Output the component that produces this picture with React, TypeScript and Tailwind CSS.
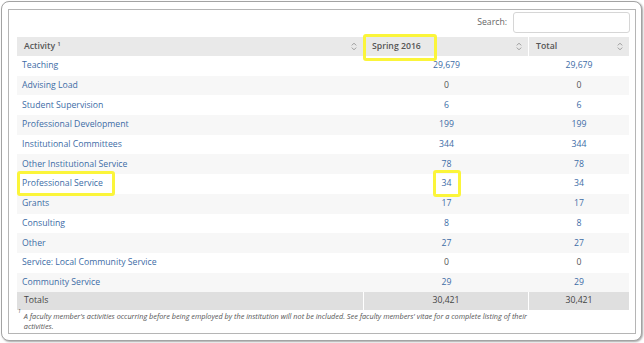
import React from "react";

type Row = { name: string; spring: string; total: string };

const rows: Row[] = [
  { name: "Teaching", spring: "29,679", total: "29,679" },
  { name: "Advising Load", spring: "0", total: "0" },
  { name: "Student Supervision", spring: "6", total: "6" },
  { name: "Professional Development", spring: "199", total: "199" },
  { name: "Institutional Committees", spring: "344", total: "344" },
  { name: "Other Institutional Service", spring: "78", total: "78" },
  { name: "Professional Service", spring: "34", total: "34" },
  { name: "Grants", spring: "17", total: "17" },
  { name: "Consulting", spring: "8", total: "8" },
  { name: "Other", spring: "27", total: "27" },
  { name: "Service: Local Community Service", spring: "0", total: "0" },
  { name: "Community Service", spring: "29", total: "29" },
];

function SortIcon() {
  return (
    <svg width="6" height="9" viewBox="0 0 6 9" className="shrink-0">
      <path d="M0.8 3.4 L3 1.2 L5.2 3.4" fill="none" stroke="#9a9a9a" strokeWidth="1" />
      <path d="M0.8 5.6 L3 7.8 L5.2 5.6" fill="none" stroke="#9a9a9a" strokeWidth="1" />
    </svg>
  );
}

function Num({ v }: { v: string }) {
  // zero values aren't links
  return v === "0" ? (
    <span className="text-[#555]">{v}</span>
  ) : (
    <span className="text-[#3d6ca6]">{v}</span>
  );
}

export default function App() {
  return (
    <div className="relative w-[644px] h-[343px] bg-white" style={{ fontFamily: '"Open Sans", "DejaVu Sans", sans-serif' }}>
      <div className="ml-[1px] mt-[1px] w-[641px] h-[340px] rounded-[8px] border border-[#a3a3a3] bg-white shadow-[1px_1px_2px_rgba(0,0,0,0.35)] flex">
        <div className="ml-[6px] mt-[7px] mr-[5px] mb-[6px] flex-1 border border-[#b5b5b5] pl-[8px] pr-[4px] pt-[2px] flex flex-col">
          {/* search */}
          <div className="flex items-center justify-end h-[21px] mr-[1px]">
            <span className="text-[8.7px] text-[#666] mr-[6px]">Search:</span>
            <div className="w-[117px] h-[21px] rounded-[3px] border border-[#d6d6d6] bg-white" />
          </div>

          {/* table */}
          <div className="mt-[4px] w-[612px] text-[8.7px]">
            <div className="grid grid-cols-[347px_165px_100px] h-[19px] bg-[#e9e9e9] text-[#555] font-semibold">
              <div className="flex items-center justify-between pl-[7px] pr-[6px] border-r border-white">
                <span>
                  Activity <sup className="text-[6px] font-semibold">1</sup>
                </span>
                <SortIcon />
              </div>
              <div className="flex items-center justify-between pl-[8px] pr-[6px] border-r border-white">
                <span>Spring 2016</span>
                <SortIcon />
              </div>
              <div className="flex items-center justify-between pl-[7px] pr-[6px]">
                <span>Total</span>
                <SortIcon />
              </div>
            </div>

            {rows.map((r, i) => (
              <div
                key={r.name}
                className={`grid grid-cols-[347px_165px_100px] h-[19.7px] items-center ${i % 2 === 1 ? "bg-[#f7f7f7]" : "bg-white"}`}
              >
                <div className="pl-[5px] text-[#3d6ca6]">{r.name}</div>
                <div className="text-center">
                  <Num v={r.spring} />
                </div>
                <div className="text-center">
                  <Num v={r.total} />
                </div>
              </div>
            ))}

            <div className="grid grid-cols-[347px_165px_100px] h-[17.5px] items-center bg-[#dfdfdf] text-[#444]">
              <div className="pl-[7px] h-full flex items-center border-r border-white">Totals</div>
              <div className="h-full flex items-center justify-center border-r border-white">30,421</div>
              <div className="h-full flex items-center justify-center">30,421</div>
            </div>
          </div>

          {/* footnote */}
          <div className="flex mt-[1px] text-[7.3px] italic text-[#555] leading-[10px]">
            <sup className="text-[5px] mr-[3px] ml-[1px] mt-[3px]">1</sup>
            <p className="w-[505px]">
              A faculty member's activities occurring before being employed by the institution will not be included. See faculty members' vitae for a complete listing of their activities.
            </p>
          </div>
        </div>
      </div>

      {/* yellow annotation boxes */}
      <div className="absolute left-[363px] top-[33px] w-[74px] h-[27px] border-[3px] border-[#fbf53a] rounded-[3px]" />
      <div className="absolute left-[17px] top-[170px] w-[98px] h-[25px] border-[3px] border-[#fbf53a] rounded-[3px]" />
      <div className="absolute left-[433px] top-[169px] w-[28px] h-[27px] border-[3px] border-[#fbf53a] rounded-[3px]" />
    </div>
  );
}
